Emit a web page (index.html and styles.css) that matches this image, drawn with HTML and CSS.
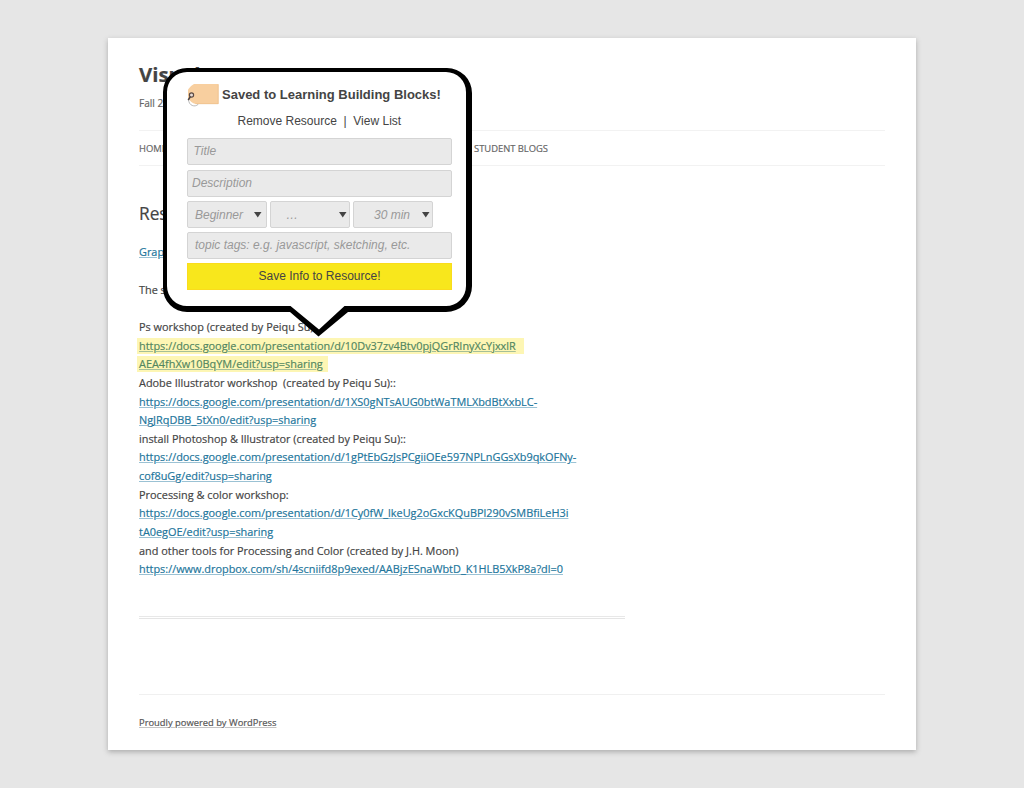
FILE: index.html
```html
<!DOCTYPE html>
<html lang="en">
<head>
<meta charset="utf-8">
<title>Resources</title>
<link rel="stylesheet" href="styles.css">
</head>
<body>
<div class="page">
  <header class="masthead">
    <h1 class="site-title">Visual L</h1>
    <p class="tagline">Fall 2</p>
  </header>
  <nav class="nav"><a>HOME</a><a class="blogs">STUDENT BLOGS</a></nav>
  <main class="content">
    <h2 class="entry-title">Res</h2>
    <p class="para"><a class="link graph">Grap</a></p>
    <p class="para"><span>The s</span></p>
    <div class="lines">
      <div class="line"><span>Ps workshop (created by Peiqu Su)</span></div>
      <div class="line"><mark class="hl wide"><a class="link">https://docs.google.com/presentation/d/10Dv37zv4Btv0pjQGrRInyXcYjxxlR</a></mark></div>
      <div class="line"><mark class="hl short"><a class="link">AEA4fhXw10BqYM/edit?usp=sharing</a></mark></div>
      <div class="line"><span>Adobe Illustrator workshop&nbsp; (created by Peiqu Su)::</span></div>
      <div class="line"><a class="link">https://docs.google.com/presentation/d/1XS0gNTsAUG0btWaTMLXbdBtXxbLC-</a></div>
      <div class="line"><a class="link">NgJRqDBB_5tXn0/edit?usp=sharing</a></div>
      <div class="line"><span>install Photoshop &amp; Illustrator (created by Peiqu Su)::</span></div>
      <div class="line"><a class="link">https://docs.google.com/presentation/d/1gPtEbGzJsPCgiiOEe597NPLnGGsXb9qkOFNy-</a></div>
      <div class="line"><a class="link">cof8uGg/edit?usp=sharing</a></div>
      <div class="line"><span>Processing &amp; color workshop:</span></div>
      <div class="line"><a class="link">https://docs.google.com/presentation/d/1Cy0fW_lkeUg2oGxcKQuBPl290vSMBfiLeH3i</a></div>
      <div class="line"><a class="link">tA0egOE/edit?usp=sharing</a></div>
      <div class="line"><span>and other tools for Processing and Color (created by J.H. Moon)</span></div>
      <div class="line"><a class="link">https://www.dropbox.com/sh/4scniifd8p9exed/AABjzESnaWbtD_K1HLB5XkP8a?dl=0</a></div>
    </div>
    <div class="rule"></div>
  </main>
  <footer class="footer"><a>Proudly powered by WordPress</a></footer>
</div>

<section class="popup">
  <svg class="bubble" width="309" height="269" viewBox="0 0 309 269">
    <path fill="#000" d="M24 0H284A25 25 0 0 1 309 25V218A26 26 0 0 1 283 244H185L155.500 268.500L127 244H24A24 24 0 0 1 0 220V24A24 24 0 0 1 24 0Z"/>
    <path fill="#fff" d="M24 4H283A20 20 0 0 1 303 24V218A20 20 0 0 1 283 238H181.500L156 261.500L127.500 238H24A20 20 0 0 1 4 218V24A20 20 0 0 1 24 4Z"/>
  </svg>
  <div class="form">
    <div class="head">
      <svg class="tag" width="33" height="24" viewBox="0 0 33 24">
        <path fill="none" stroke="#a8a8a8" stroke-width=".8" d="M1.500 16C1.500 24.500 11 24.500 12 19.500"/>
        <path fill="#f8cf9f" d="M7 1H31.500V21H8.500Q4 20 1 15V6.500Q3 3 7 1Z"/>
        <path fill="none" stroke="#eebf8b" stroke-width=".7" d="M8.500 20.700H31.200V1.500"/>
        <circle cx="4.500" cy="12" r="2.100" fill="#e9dcd6" stroke="#5b4a44" stroke-width="1.200"/>
        <path fill="none" stroke="#4b4444" stroke-width="1.500" d="M3.500 13.500L1.200 17"/>
      </svg>
      <strong class="saved">Saved to Learning Building Blocks!</strong>
    </div>
    <div class="actions"><span>Remove Resource &nbsp;|&nbsp; View List</span></div>
    <div class="fields">
      <div class="field title">Title</div>
      <div class="field desc">Description</div>
      <div class="selects">
        <div class="field select s1"><span>Beginner</span><svg width="8" height="6"><path d="M0 0H7.500L3.750 5.500Z" fill="#444"/></svg></div>
        <div class="field select s2"><span>…</span><svg width="8" height="6"><path d="M0 0H7.500L3.750 5.500Z" fill="#444"/></svg></div>
        <div class="field select s3"><span>30 min</span><svg width="8" height="6"><path d="M0 0H7.500L3.750 5.500Z" fill="#444"/></svg></div>
      </div>
      <div class="field topics">topic tags: e.g. javascript, sketching, etc.</div>
      <div class="save"><span>Save Info to Resource!</span></div>
    </div>
  </div>
</section>
</body>
</html>
```

FILE: styles.css
```css
* { box-sizing: border-box; }
body {
  margin: 0;
  height: 788px;
  padding: 38px 108px 0;
  overflow: hidden;
  background: #e6e6e6;
  font-family: "Open Sans", sans-serif;
  color: #444;
}
h1, h2, p { margin: 0; font-weight: 400; }
.page {
  width: 808px;
  height: 712px;
  padding: 0 31px;
  background: #fff;
  box-shadow: 0 2px 5px rgba(80, 80, 80, .38);
  -webkit-text-stroke: .18px currentColor;
}
.masthead { height: 92px; padding-top: 22px; }
.site-title { font-size: 20.4px; line-height: 28px; font-weight: 700; }
.tagline { margin-top: 6px; font-size: 10.1px; line-height: 18px; color: #666; }
.nav {
  display: flex;
  align-items: center;
  width: 746px;
  height: 36px;
  padding-top: 1px;
  border-top: 1px solid #f2f2f2;
  border-bottom: 1px solid #f2f2f2;
  font-size: 9.4px;
  color: #666;
}
.nav a { width: 335px; }
.content { padding-top: 34px; }
.entry-title { height: 28px; font-size: 17.3px; line-height: 28px; }
.para { height: 37.3px; font-size: 10.9px; line-height: 18.650px; }
.entry-title + .para { margin-top: 15.400px; }
.lines { font-size: 10.9px; }
.line { height: 18.650px; line-height: 18.650px; white-space: nowrap; }
.link {
  color: #21759b;
  text-decoration: underline;
  text-decoration-color: #9bc2d4;
  text-decoration-thickness: 1px;
  text-underline-offset: 1px;
}
.hl {
  display: block;
  height: 17px;
  margin-left: -2px;
  padding-left: 2px;
  line-height: 18.650px;
  background: linear-gradient(#fdf6b4, #fdf6b4) 0 1px no-repeat;
}
.hl .link { color: #528660; text-decoration-color: #a5bf98; }
.wide { width: 387px; }
.short { width: 191px; }
.rule { width: 486px; height: 3px; margin-top: 36.600px; border-top: 1px solid #e8e8e8; border-bottom: 1px solid #e5e5e5; }
.footer {
  width: 746px;
  margin-top: 75px;
  padding-top: 20px;
  border-top: 1px solid #f0f0f0;
  font-size: 9.37px;
  line-height: 16px;
  color: #555;
}
.footer a { text-decoration: underline; text-decoration-color: #c4c4c4; text-underline-offset: 1px; }

.popup {
  position: absolute;
  left: 163px;
  top: 68px;
  width: 309px;
  height: 269px;
  font-family: "Liberation Sans", Arial, sans-serif;
}
.bubble { position: absolute; inset: 0; }
.form { position: relative; width: 289px; padding: 15px 0 0 24px; }
.head { display: flex; height: 24px; white-space: nowrap; }
.tag { flex: none; }
.saved { margin-left: 2px; font-size: 13px; line-height: 23px; }
.actions { height: 31px; padding-left: 50.500px; font-size: 12px; line-height: 28px; white-space: nowrap; }
.fields { display: flex; flex-direction: column; gap: 4px; }
.field {
  height: 27px;
  padding-left: 5.500px;
  border: 1px solid #d4d4d4;
  border-radius: 2px;
  background: #eaeaea;
  font-size: 12px;
  font-style: italic;
  line-height: 25px;
  color: #999;
  white-space: nowrap;
}
.desc { margin-top: 1px; padding-left: 4px; }
.topics { padding-left: 7px; }
.selects { display: flex; gap: 3px; }
.select { display: flex; width: 80px; align-items: center; justify-content: space-between; padding: 1px 4px 0 7px; }
.s2 { padding-left: 15px; padding-right: 2px; }
.s3 { padding-left: 20px; padding-right: 2px; }
.save {
  height: 27px;
  border: 1px solid #fadc1c;
  background: #f8e71c;
  font-size: 12px;
  line-height: 25px;
  text-align: center;
}
```
